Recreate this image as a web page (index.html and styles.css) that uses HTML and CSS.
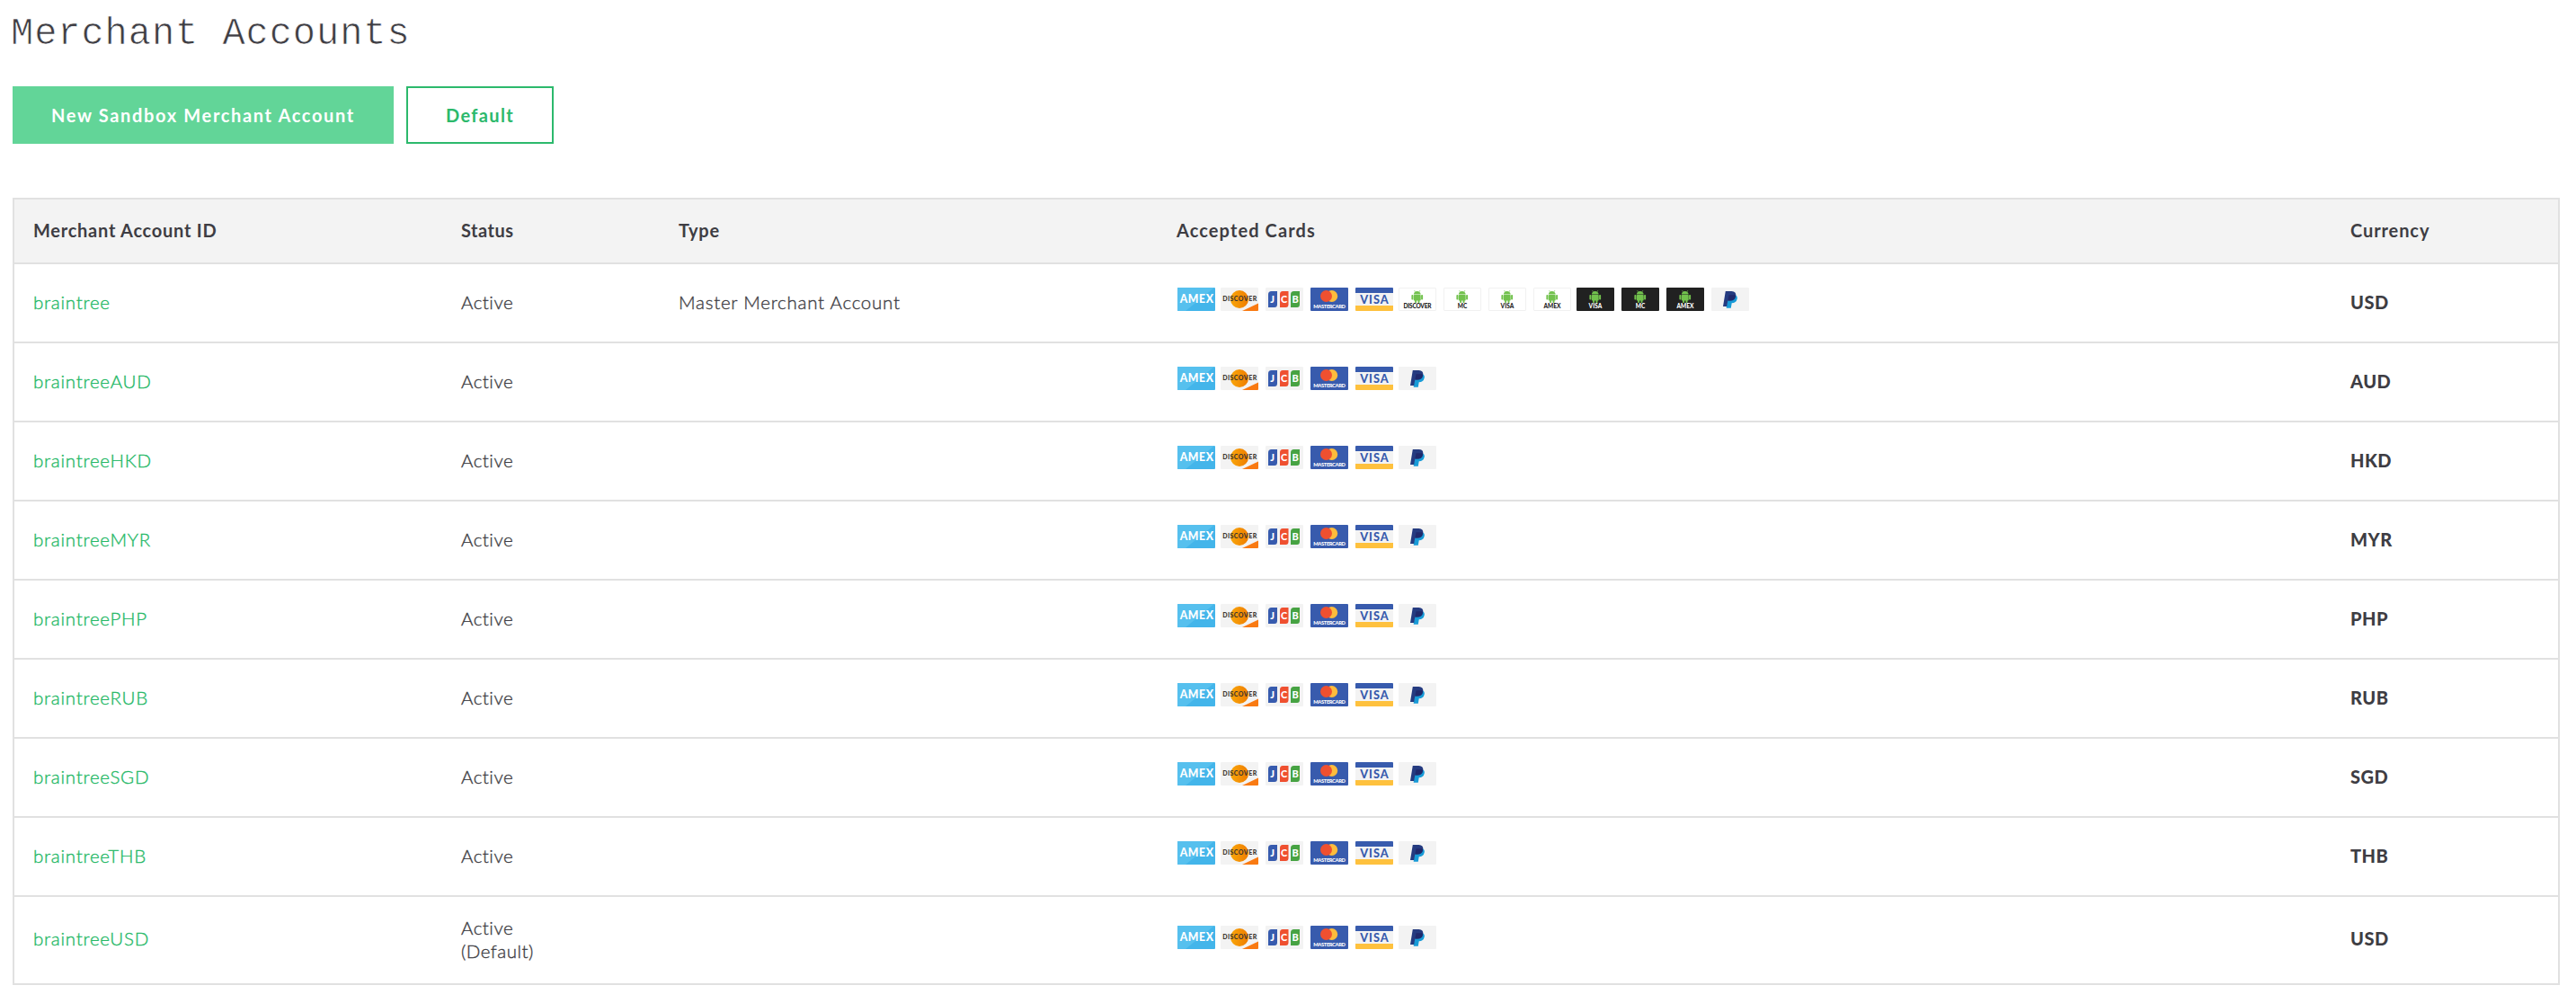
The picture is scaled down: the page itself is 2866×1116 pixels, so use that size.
FILE: index.html
```html
<!DOCTYPE html>
<html lang="en">
<head>
<meta charset="utf-8">
<title>Merchant Accounts</title>
<link rel="stylesheet" href="styles.css">
</head>
<body>
<svg class="defs" width="0" height="0" aria-hidden="true">
  <defs>
    <linearGradient id="orange" x1="0" x2="1" y1="0" y2="0"><stop offset="0" stop-color="#f9a60a"/><stop offset="1" stop-color="#ef7d00"/></linearGradient>
    <symbol id="amex" viewBox="0 0 42 26">
      <rect width="42" height="26" rx="1" fill="#43b5ea"/>
      <path d="M1 0H41L9 26H1Q0 26 0 25V1Q0 0 1 0Z" fill="#56c0ee"/>
      <text class="brand" x="2.700" y="17.200" font-size="12.200" textLength="37.300" fill="#fff">AMEX</text>
    </symbol>
    <symbol id="discover" viewBox="0 0 42 26">
      <rect width="42" height="26" rx="1" fill="#f3f3f3"/>
      <circle cx="21" cy="13" r="10" fill="url(#orange)"/>
      <path d="M24 26L42 17.500V25Q42 26 41 26Z" fill="#f97a12"/>
      <text class="brand" x="2.200" y="15.300" font-size="7" textLength="38" fill="#3c3530">DISCOVER</text>
    </symbol>
    <symbol id="jcb" viewBox="0 0 42 26">
      <rect width="42" height="26" rx="1" fill="#f3f3f3"/>
      <path d="M6.500 4H13V18.500Q13 22 10 22H3V7.500Q3 4 6.500 4Z" fill="#375bae"/>
      <path d="M19 4H25.500V18.500Q25.500 22 22.500 22H16V7.500Q16 4 19 4Z" fill="#ef5030"/>
      <path d="M31.500 4H38V18.500Q38 22 35 22H28V7.500Q28 4 31.500 4Z" fill="#47a343"/>
      <g class="brand" font-size="11" fill="#fff"><text x="5.200" y="17">J</text><text x="16.900" y="17">C</text><text x="29.400" y="17">B</text></g>
    </symbol>
    <symbol id="mastercard" viewBox="0 0 42 26">
      <rect width="42" height="26" rx="1" fill="#385bad"/>
      <circle cx="23.700" cy="9.500" r="6.500" fill="#fdbc3c"/>
      <circle cx="17.500" cy="9.500" r="6.500" fill="#ef5030"/>
      <text class="brand" x="3.200" y="22.800" font-size="5.800" textLength="35.800" fill="#fff">MASTERCARD</text>
    </symbol>
    <symbol id="visa" viewBox="0 0 42 26">
      <rect width="42" height="26" rx="1" fill="#f3f3f3"/>
      <path d="M1 0H41Q42 0 42 1V6H0V1Q0 0 1 0Z" fill="#385bad"/>
      <path d="M0 20H42V25Q42 26 41 26H1Q0 26 0 25Z" fill="#fec13e"/>
      <text class="brand" x="5.200" y="17.500" font-size="12.700" textLength="31.500" fill="#385bad">VISA</text>
    </symbol>
    <symbol id="robot" viewBox="0 0 42 26">
      <g fill="#72c24d">
        <path d="M16.800 7.600Q17.300 4 20.700 4T24.700 7.600Z"/>
        <rect x="16.800" y="8" width="7.900" height="6.600" rx=".8"/>
        <rect x="14.400" y="8" width="2" height="5.600" rx=".8"/>
        <rect x="25.100" y="8" width="2" height="5.600" rx=".8"/>
        <rect x="18.100" y="13" width="2" height="4" rx=".8"/>
        <rect x="21.500" y="13" width="2" height="4" rx=".8"/>
      </g>
      <path d="M18.400 4.800L17.600 3M23.100 4.800L23.900 3" stroke="#72c24d" stroke-width=".6"/>
    </symbol>
    <symbol id="light" viewBox="0 0 42 26">
      <rect x=".5" y=".5" width="41" height="25" rx=".5" fill="#fff" stroke="#f1f1f1"/>
      <use href="#robot" width="42" height="26"/>
    </symbol>
    <symbol id="dark" viewBox="0 0 42 26">
      <rect width="42" height="26" rx="1" fill="#212121"/>
      <use href="#robot" width="42" height="26"/>
    </symbol>
    <symbol id="paypal" viewBox="0 0 42 26">
      <rect width="42" height="26" rx="1" fill="#f3f3f3"/>
      <path d="M18 8H26.500Q29.500 9.500 28.700 12.600Q27.700 17.300 22.700 17.300L21.800 22.700H16.700Z" fill="#189bd7"/>
      <path d="M15.800 4H22.500Q28 4.200 27.200 9.200Q26.200 14.600 20.700 14.600H18.300L17.200 21H13Z" fill="#253b80"/>
      <path d="M19.500 8.300H27Q27.300 14.600 20.700 14.600H18.500Z" fill="#20296b"/>
    </symbol>
  </defs>
</svg>

<main class="page">
  <h1 class="title">Merchant Accounts</h1>
  <div class="actions">
    <button class="button button-primary">New Sandbox Merchant Account</button>
    <button class="button button-outline">Default</button>
  </div>
  <section class="table">
    <header class="row head">
      <div class="h-id">Merchant Account ID</div><div class="h-status">Status</div><div class="h-type">Type</div><div class="h-cards">Accepted Cards</div><div class="h-currency">Currency</div>
    </header>
    <div id="accounts"></div>
  </section>
</main>
<script src="app.js"></script>
</body>
</html>
```
FILE: styles.css
```css
* { box-sizing: border-box; }

body {
  margin: 0;
  background: #fff;
  color: #3e3d43;
  font-family: Lato, "Open Sans", sans-serif;
  font-size: 20px;
  line-height: 26px;
}

.defs { position: absolute; }

.page { padding: 14px 18px 20px 14px; }

.title {
  margin: 0 0 0 -2px;
  height: 48px;
  font: 400 42px/48px "Liberation Mono", monospace;
  letter-spacing: 0.95px;
  -webkit-text-stroke: 0.7px #fff;
}

.actions { display: flex; gap: 14px; margin-top: 34px; }

.button {
  height: 64px;
  padding: 0;
  border: 2px solid #62d598;
  font: 700 20px/26px Lato, sans-serif;
}
.button-primary { width: 424px; background: #62d598; color: #fff; letter-spacing: 1.65px; }
.button-outline { width: 164px; background: #fff; color: #2cb96c; border-color: #2cb96c; letter-spacing: 1.35px; }

.table { margin-top: 60px; border: 2px solid #e1e1e1; border-bottom: 0; }

.row {
  display: grid;
  grid-template-columns: 476px 242px 554px 1306px 1fr;
  align-items: center;
  height: 88px;
  padding: 0 0 2px 21px;
  border-bottom: 2px solid #e1e1e1;
}
.row.tall { height: 98px; }
.head { height: 72px; background: #f3f3f3; font-weight: 700; letter-spacing: 0.75px; }
.h-status { letter-spacing: 0.5px; }
.h-cards { letter-spacing: 1.1px; }
.h-currency { letter-spacing: 0.9px; }

.account, .status, .type {
  font-size: 20.5px;
  font-weight: 300;
  letter-spacing: 0.75px;
  -webkit-text-stroke: 0.35px currentColor;
}
.status { letter-spacing: 0.5px; }
.account { color: #24b866; text-decoration: none; }
.currency { font-weight: 900; letter-spacing: 0.5px; }

.cards { display: flex; gap: 8px; height: 26px; margin: -6px 0 0 1px; }
.tall .cards { margin-top: -4px; }
.tall .account { display: block; padding-bottom: 2px; }
.tall .currency { padding-bottom: 2px; }
.card { display: block; width: 42px; height: 26px; }
.card:nth-child(4n + 2) { margin-left: -2px; }
.brand { font-family: Lato, sans-serif; font-weight: 900; }
```
FILE: app.js
```js
const basic = ["amex", "discover", "jcb", "mastercard", "visa"];
const wallet = [["light", "DISCOVER", 31], ["light", "MC", 10.5], ["light", "VISA", 14.8], ["light", "AMEX", 19],
                ["dark", "VISA", 14.8], ["dark", "MC", 10.5], ["dark", "AMEX", 19]];

const card = (id, label = "", width = 0) =>
  `<svg class="card" viewBox="0 0 42 26"><use href="#${id}" width="42" height="26"/>` +
  (label ? `<text class="brand" x="${21 - width / 2}" y="23.4" font-size="6.5" textLength="${width}" fill="${id === "dark" ? "#fff" : "#222"}">${label}</text>` : "") +
  `</svg>`;

const codes = ["", "AUD", "HKD", "MYR", "PHP", "RUB", "SGD", "THB", "USD"];

document.getElementById("accounts").innerHTML = codes.map((code, i) => {
  const last = i === codes.length - 1;
  const cards = basic.map(id => card(id)).join("") +
    (i === 0 ? wallet.map(w => card(...w)).join("") : "") + card("paypal");
  return `<div class="row${last ? " tall" : ""}">
    <div><a class="account">braintree${code}</a></div>
    <div class="status">Active${last ? "<br>(Default)" : ""}</div>
    <div class="type">${i === 0 ? "Master Merchant Account" : ""}</div>
    <div class="cards">${cards}</div>
    <div class="currency">${code || "USD"}</div>
  </div>`;
}).join("");
```
